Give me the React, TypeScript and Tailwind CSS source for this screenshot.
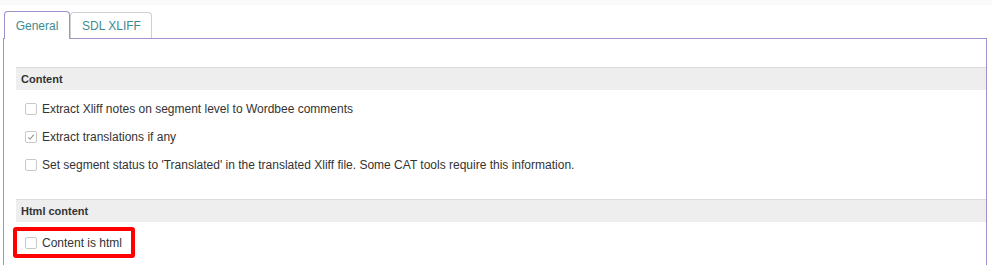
import React from "react";

const purple = "border-[#a190cc]";

function Box({ checked }: { checked?: boolean }) {
  return (
    <span className="inline-flex h-[12px] w-[12px] shrink-0 items-center justify-center rounded-[2px] border border-[#c9c9c9] bg-white">
      {checked && (
        <svg width="8" height="8" viewBox="0 0 8 8">
          <path d="M1.2 4.3 L3.1 6.1 L6.8 1.6" fill="none" stroke="#9a9a9a" strokeWidth="1.1" />
        </svg>
      )}
    </span>
  );
}

function Row({ label, checked }: { label: string; checked?: boolean }) {
  return (
    <div className="flex h-[28px] items-center gap-[5px] pl-[9px]">
      <Box checked={checked} />
      <span>{label}</span>
    </div>
  );
}

function Header({ title }: { title: string }) {
  return (
    <div className="flex h-[23px] items-center border-t border-[#dcdcdc] bg-[#eeeeee] pl-[5px] text-[11px] font-bold text-[#333]">
      {title}
    </div>
  );
}

export default function App() {
  return (
    <div
      className="relative h-[265px] w-[992px] overflow-hidden bg-white text-[12px] text-[#333]"
      style={{ fontFamily: '"Liberation Sans", Arial, sans-serif' }}
    >
      <div className="h-[5px] bg-[#fafafa]" />
      <div className="mt-[6px] flex items-end pl-[4px]">
        <div className={`relative z-10 -mb-px flex h-[28px] w-[66px] items-center justify-center rounded-t-[4px] border border-b-0 ${purple} bg-white text-[#3d8b91]`}>
          General
        </div>
        <div className="flex h-[26px] w-[82px] items-center justify-center rounded-t-[4px] border border-b-0 border-[#cfcfcf] bg-white pl-[1px] text-[#3d8b91]">
          SDL XLIFF
        </div>
      </div>
      <div className={`ml-[3px] h-[300px] w-[984px] border ${purple} pl-[12px] pt-[28px]`}>
        <Header title="Content" />
        <div className="pt-[5px]">
          <Row label="Extract Xliff notes on segment level to Wordbee comments" />
          <Row label="Extract translations if any" checked />
          <Row label="Set segment status to 'Translated' in the translated Xliff file. Some CAT tools require this information." />
        </div>
        <div className="mt-[20px]">
          <Header title="Html content" />
        </div>
        <div className="pt-[7px]">
          <Row label="Content is html" />
        </div>
      </div>
      <div className="absolute left-[13px] top-[227px] h-[31px] w-[122px] rounded-[3px] border-[4px] border-[#ff0000]" />
    </div>
  );
}
